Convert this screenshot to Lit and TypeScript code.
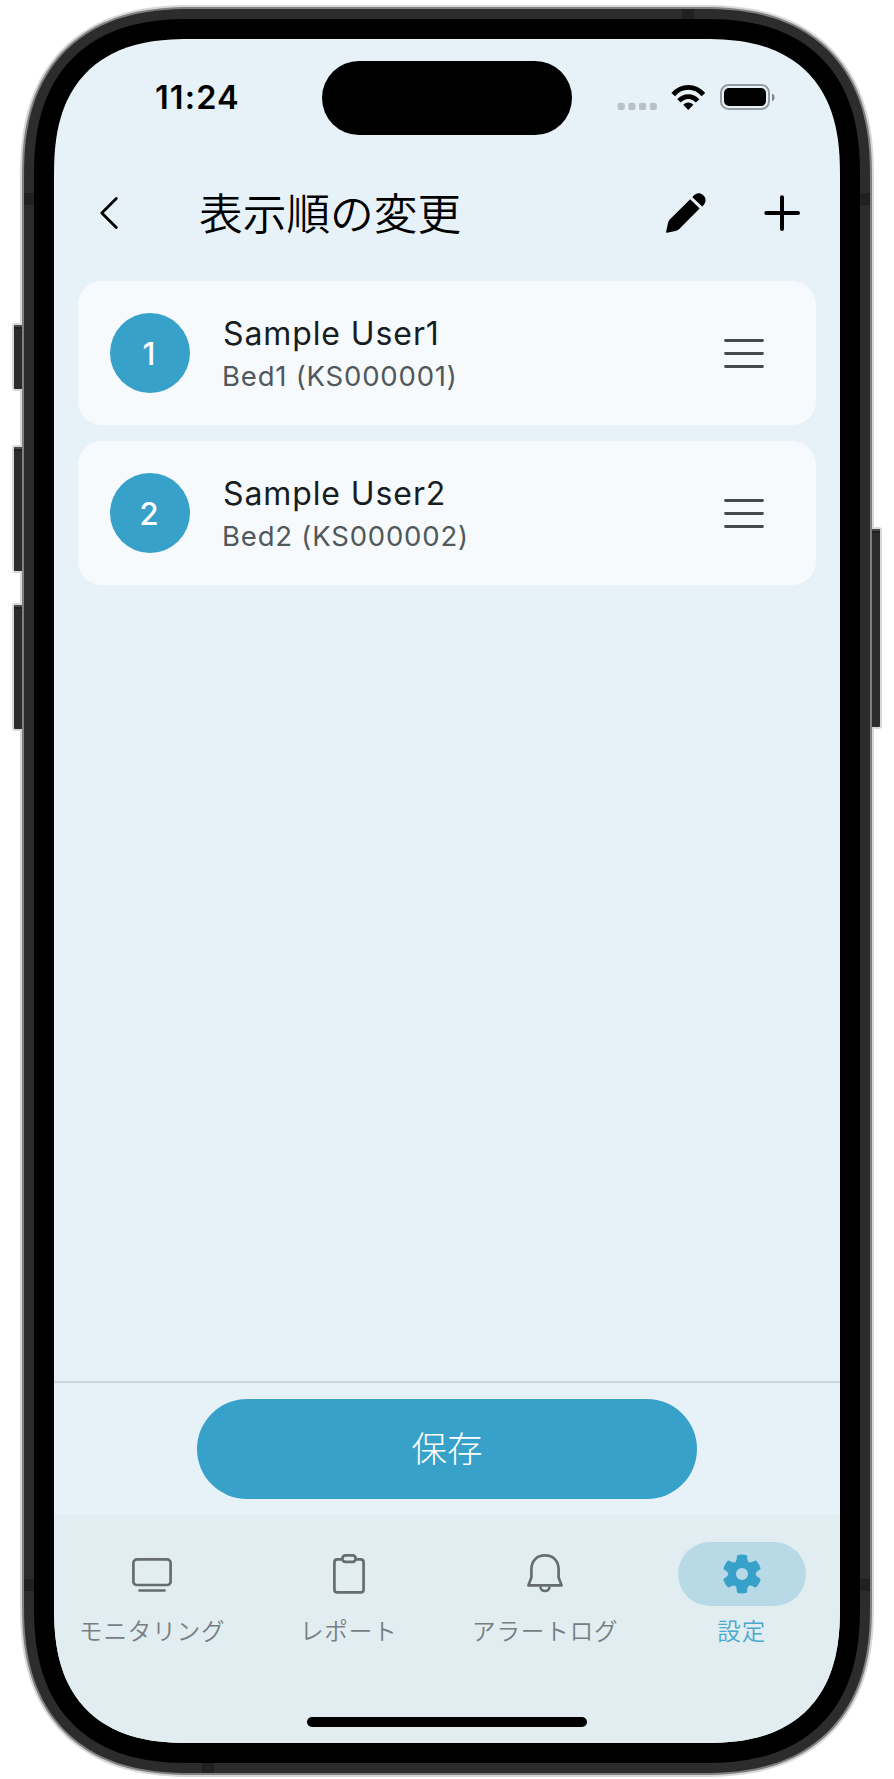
import { LitElement, html, css, svg, unsafeCSS } from "lit";
import { customElement } from "lit/decorators.js";

/**
 * Rectangle whose corners are superellipse arcs: each one spans `l` pixels
 * along both sides, and `n` sets how square the arc is.
 */
function squircle(x: number, y: number, w: number, h: number, l: number, n: number): string {
  const STEPS = 48;
  const arc: [number, number][] = [];
  for (let i = 0; i <= STEPS; i++) {
    const t = (i / STEPS) * (Math.PI / 2);
    arc.push([l - l * Math.pow(Math.cos(t), 2 / n), l - l * Math.pow(Math.sin(t), 2 / n)]);
  }
  const back = [...arc].reverse();
  const R = x + w, B = y + h;
  const pts = [
    ...arc.map(([a, b]) => [x + a, y + b]),
    ...back.map(([a, b]) => [R - a, y + b]),
    ...arc.map(([a, b]) => [R - a, B - b]),
    ...back.map(([a, b]) => [x + a, B - b]),
  ];
  return "M" + pts.map(([a, b]) => `${a.toFixed(2)} ${b.toFixed(2)}`).join("L") + "Z";
}

const SCREEN_CLIP = squircle(0, 0, 786, 1704, 140, 2.58);

const sideButton = (x: number, y: number, h: number) => svg`
  <rect x=${x - 2} y=${y - 2} width="14" height=${h + 4} rx="3" fill="#d8d8d8"/>
  <rect x=${x} y=${y} width="10" height=${h} rx="1" fill="#2c2c2c"/>
  <rect x=${x} y=${y} width="10" height="2" rx="1" fill="#4a4a4a"/>
  <rect x=${x} y=${y + 2} width="10" height="2" fill="#202020"/>`;

@customElement("device-shell")
class DeviceShell extends LitElement {
  static styles = css`
    :host { display: block; width: 894px; height: 1779px; }
    svg { display: block; }
  `;
  render() {
    return html`<svg width="894" height="1779" viewBox="0 0 894 1779">
      <path d=${squircle(20, 5, 854, 1772, 174, 2.442)} fill="#d8d8d8"/>
      ${sideButton(14, 325, 64)}${sideButton(14, 447, 124)}${sideButton(14, 605, 124)}${sideButton(870, 529, 198)}
      <path d=${squircle(22, 7, 850, 1768, 172, 2.448)} fill="#808080"/>
      <path d=${squircle(24, 9, 846, 1764, 170, 2.455)} fill="#2c2c2c"/>
      <g fill="#202020">
        <rect x="24" y="193" width="846" height="12"/>
        <rect x="24" y="1579" width="846" height="12"/>
        <rect x="682" y="9" width="12" height="12"/>
        <rect x="202" y="1761" width="12" height="12"/>
      </g>
      <path d=${squircle(34, 19, 826, 1744, 160, 2.489)} fill="#000"/>
    </svg>`;
  }
}

@customElement("status-bar")
class StatusBar extends LitElement {
  static styles = css`
    :host { display: grid; grid-template-columns: 1fr 250px 1fr; height: 118px; padding-top: 22.3px; box-sizing: border-box; }
    .time { padding: 16px 0 0 101px; font: 600 32.5px/42px Inter, sans-serif; letter-spacing: 1.1px; color: #000; }
    .island { height: 74px; border-radius: 37px; background: #000; }
    .status { display: flex; padding: 22.7px 0 0 45px; }
    svg { display: block; }
  `;
  render() {
    return html`
      <div class="time">11:24</div>
      <div class="island"></div>
      <div class="status">
        <svg width="160" height="27" viewBox="617 84 160 27">
          <g fill="#b7c1c7">
            ${[617.6, 628.3, 639, 649.7].map((x) => svg`<rect x=${x} y="102.8" width="7.2" height="7.2" rx="2.2"/>`)}
          </g>
          <g fill="none" stroke="#000" stroke-width="4.8">
            <path d="M673.2 94.6C681.5 84.9 695.1 84.9 703.4 94.6"/>
            <path d="M679 100.9C684.4 95.2 692.2 95.2 697.6 100.9"/>
          </g>
          <path d="M683.2 104.8Q688.3 100.2 693.4 104.8L688.3 109.9Z" fill="#000"/>
          <rect x="721" y="85" width="48" height="24" rx="7.5" fill="none" stroke="#959d9f" stroke-width="2"/>
          <rect x="724" y="88" width="42" height="18" rx="5" fill="#000"/>
          <path d="M772 93.4C775.4 94.7 775.4 100 772 101.3Z" fill="#7f8688"/>
        </svg>
      </div>`;
  }
}

@customElement("app-header")
class AppHeader extends LitElement {
  static styles = css`
    :host { display: flex; align-items: center; height: 112px; padding: 0 39px 0 44px; box-sizing: border-box; }
    h1 { flex: 1; margin: 0 0 4px 77px; font: 350 43.7px/64px "Noto Sans CJK JP", sans-serif; color: #000; }
    svg { display: block; }
    .pencil { margin-right: 56px; }
  `;
  render() {
    return html`
      <svg width="24" height="40" viewBox="98 193 24 40"><path d="M116.3 198.5L101.8 213L116.3 227.5" fill="none" stroke="#000" stroke-width="2.8" stroke-linecap="round" stroke-linejoin="round"/></svg>
      <h1>表示順の変更</h1>
      <svg class="pencil" width="42" height="42" viewBox="665 192 42 42">
        <path d="M690.2 199.2L699.6 208.6L679.3 229Q677.6 230.6 675.4 231L667 232.8Q665.9 233 666.1 231.8L668 223Q668.4 220.8 670 219.3Z"/>
        <path d="M692.4 197.2C695.8 192.4 700 192.5 703 195C706.6 198.2 706.5 202.6 702.2 206.4Z"/>
      </svg>
      <svg width="38" height="38" viewBox="763 194 38 38"><path d="M766.3 213H798M782 197.2V229" fill="none" stroke="#000" stroke-width="4" stroke-linecap="round"/></svg>`;
  }
}

@customElement("user-row")
class UserRow extends LitElement {
  static properties = { order: { type: Number }, name: {}, device: {} };
  declare order: number;
  declare name: string;
  declare device: string;
  static styles = css`
    :host { display: flex; align-items: center; height: 144px; padding: 0 52px 0 32px; box-sizing: border-box; border-radius: 24px; background: #f6fafd; font-family: Inter, sans-serif; }
    .order { display: grid; place-items: center; width: 80px; height: 80px; padding: 2px 2px 0 0; box-sizing: border-box; margin-right: 32px; border-radius: 50%; background: #37a1ca; color: #fff; font-size: 31px; font-weight: 500; line-height: 40px; }
    .info { flex: 1; padding-top: 2px; white-space: nowrap; }
    .name { padding-left: 1px; font-size: 32px; line-height: 44px; letter-spacing: 0.9px; color: #171d20; }
    .device { font-size: 27.5px; line-height: 40px; letter-spacing: 0.8px; color: #50585b; }
    svg { display: block; }
  `;
  render() {
    return html`
      <div class="order">${this.order}</div>
      <div class="info"><div class="name">${this.name}</div><div class="device">${this.device}</div></div>
      <svg width="40" height="30" viewBox="0 0 40 30"><path d="M1.5 2.5H38.5M1.5 15.5H38.5M1.5 28.5H38.5" stroke="#454c50" stroke-width="2.8" stroke-linecap="round"/></svg>`;
  }
}

function gearPath(): string {
  const pts: string[] = [];
  const p = (r: number, deg: number) => {
    const t = ((deg - 90) * Math.PI) / 180;
    return `${(24 + r * Math.cos(t)).toFixed(2)} ${(24 + r * Math.sin(t)).toFixed(2)}`;
  };
  for (let i = 0; i < 6; i++) {
    const a = i * 60;
    pts.push(`${i ? "L" : "M"}${p(14.4, a - 24)}L${p(15.2, a - 21)}L${p(18.4, a - 16)}Q${p(19.4, a - 15)} ${p(19.5, a - 12)}A19.6 19.6 0 0 1 ${p(19.5, a + 12)}Q${p(19.4, a + 15)} ${p(18.4, a + 16)}L${p(15.2, a + 21)}L${p(14.4, a + 24)}Q${p(12.8, a + 30)} ${p(14.4, a + 36)}`);
  }
  return pts.join("") + "ZM24 18A6 6 0 1 0 24 30A6 6 0 1 0 24 18Z";
}

const ICONS = {
  monitor: svg`<g fill="none" stroke="#666c6f" stroke-width="2.7" stroke-linecap="round"><rect x="5.4" y="9.4" width="37.2" height="25.6" rx="3.6"/><path d="M11.5 40.5H36.5"/></g>`,
  report: svg`<g fill="none" stroke="#666c6f" stroke-width="2.7"><path d="M17 9.4H12.4Q9.4 9.4 9.4 12.4V39.4Q9.4 42.4 12.4 42.4H35.6Q38.6 42.4 38.6 39.4V12.4Q38.6 9.4 35.6 9.4H31"/><rect x="17.4" y="5.4" width="13.2" height="6.4" rx="3"/></g>`,
  bell: svg`<g fill="none" stroke="#666c6f" stroke-width="2.7" stroke-linejoin="round"><path d="M10.4 19.6C10.4 10.6 16 5.4 24 5.4S37.6 10.6 37.6 19.6V26.4Q37.6 27.6 38 28.6L40.6 35.4H7.4L10 28.6Q10.4 27.6 10.4 26.4Z"/><path d="M19.4 36.5C19.8 42.5 28.2 42.5 28.6 36.5"/></g>`,
  gear: svg`<path fill="#37a1ca" fill-rule="evenodd" d=${gearPath()}/>`,
};

const TABS: { icon: keyof typeof ICONS; label: string; active?: boolean }[] = [
  { icon: "monitor", label: "モニタリング" },
  { icon: "report", label: "レポート" },
  { icon: "bell", label: "アラートログ" },
  { icon: "gear", label: "設定", active: true },
];

@customElement("tab-bar")
class TabBar extends LitElement {
  static styles = css`
    :host { display: flex; flex-direction: column; justify-content: space-between; align-items: center; height: 228px; padding: 27px 0 16px; box-sizing: border-box; background: #e1edf1; }
    nav { display: grid; grid-template-columns: repeat(4, 1fr); width: 100%; }
    .tab { display: flex; flex-direction: column; align-items: center; white-space: nowrap; }
    .pill { display: grid; place-items: center; width: 128px; height: 64px; border-radius: 32px; }
    .active .pill { background: #b8dae6; }
    .label { margin-top: 7px; font: 350 23.5px/34px "Noto Sans CJK JP", sans-serif; letter-spacing: 0.9px; color: #777d80; }
    .active .label { color: #4aa9ce; }
    .home { width: 280px; height: 10px; border-radius: 5px; background: #000; }
    svg { display: block; }
  `;
  render() {
    return html`
      <nav>${TABS.map((t) => html`<div class="tab ${t.active ? "active" : ""}">
        <div class="pill"><svg width="48" height="48" viewBox="0 0 48 48">${ICONS[t.icon]}</svg></div>
        <div class="label">${t.label}</div></div>`)}</nav>
      <div class="home"></div>`;
  }
}

const USERS = [
  { name: "Sample User1", device: "Bed1 (KS000001)" },
  { name: "Sample User2", device: "Bed2 (KS000002)" },
];

@customElement("app-root")
class AppRoot extends LitElement {
  static styles = css`
    :host { display: grid; width: 894px; height: 1779px; background: #fff; overflow: hidden; }
    device-shell, .screen { grid-area: 1 / 1; }
    .screen { display: flex; flex-direction: column; width: 786px; height: 1704px; margin: 39px 0 0 54px; background: #e7f2f8; clip-path: path("${unsafeCSS(SCREEN_CLIP)}"); }
    .list { flex: 1; display: flex; flex-direction: column; gap: 16px; padding: 12px 24px 0; }
    .footer { display: flex; justify-content: center; padding: 16px 0; border-top: 2px solid #cad6dc; }
    button { width: 500px; height: 100px; padding: 0 0 4px; border: 0; border-radius: 50px; background: #37a1ca; color: #fff; font: 300 35.5px/96px "Noto Sans CJK JP", sans-serif; }
  `;
  render() {
    return html`
      <device-shell></device-shell>
      <div class="screen">
        <status-bar></status-bar>
        <app-header></app-header>
        <div class="list">${USERS.map((u, i) => html`<user-row .order=${i + 1} .name=${u.name} .device=${u.device}></user-row>`)}</div>
        <div class="footer"><button>保存</button></div>
        <tab-bar></tab-bar>
      </div>`;
  }
}
